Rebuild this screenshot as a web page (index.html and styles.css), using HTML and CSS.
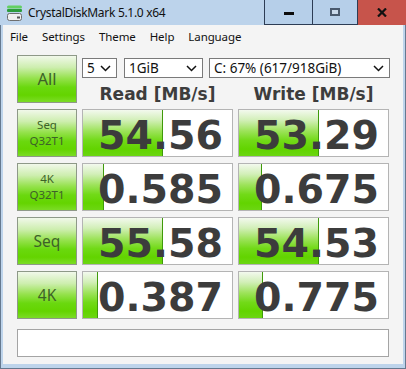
FILE: index.html
```html
<!DOCTYPE html>
<html lang="en">
<head>
  <meta charset="UTF-8">
  <title>CrystalDiskMark 5.1.0 x64</title>
  <link rel="stylesheet" href="styles.css">
</head>
<body>
  <div class="window">
    <div class="titlebar">
      <svg class="app-icon" viewBox="0 0 17 16">
        <rect x="1" y="0.5" width="15" height="3" rx="1.5" fill="#62d062"/>
        <rect x="1" y="4" width="15" height="3" rx="1" fill="#2c9c3c"/>
        <rect x="1.5" y="8.5" width="14" height="7" rx="2" fill="#efefef" stroke="#6e6e6e"/>
        <rect x="11" y="11.5" width="3" height="2" fill="#555"/>
      </svg>
      <span class="title">CrystalDiskMark 5.1.0 x64</span>
      <div class="caption-buttons">
        <div class="cap-btn min"><span class="min-glyph"></span></div>
        <div class="cap-btn max"><span class="max-glyph"></span></div>
        <div class="cap-btn close">
          <svg width="10" height="9" viewBox="0 0 10 9"><path d="M1 0.5 L9 8.5 M9 0.5 L1 8.5" stroke="#111" stroke-width="2.2"/></svg>
        </div>
      </div>
    </div>

    <div class="pane">
      <div class="menubar">
        <span>File</span>
        <span>Settings</span>
        <span>Theme</span>
        <span>Help</span>
        <span>Language</span>
      </div>

      <div class="client">
        <div class="board">
          <div class="btn big">All</div>
          <div class="controls">
            <div class="selects">
              <div class="select s-count">5<svg class="chev" viewBox="0 0 11 7"><path d="M1 1 L5.5 5.5 L10 1" fill="none" stroke="#111" stroke-width="1.5"/></svg></div>
              <div class="select s-size">1GiB<svg class="chev" viewBox="0 0 11 7"><path d="M1 1 L5.5 5.5 L10 1" fill="none" stroke="#111" stroke-width="1.5"/></svg></div>
              <div class="select s-drive">C: 67% (617/918GiB)<svg class="chev" viewBox="0 0 11 7"><path d="M1 1 L5.5 5.5 L10 1" fill="none" stroke="#111" stroke-width="1.5"/></svg></div>
            </div>
            <div class="headers">
              <div>Read [MB/s]</div>
              <div>Write [MB/s]</div>
            </div>
          </div>

          <div class="btn"><span>Seq</span><span>Q32T1</span></div>
          <div class="cell"><span class="fill" style="width: 80px"></span><span class="value">54.56</span></div>
          <div class="cell"><span class="fill" style="width: 80px"></span><span class="value">53.29</span></div>

          <div class="btn"><span>4K</span><span>Q32T1</span></div>
          <div class="cell"><span class="fill" style="width: 21px"></span><span class="value">0.585</span></div>
          <div class="cell"><span class="fill" style="width: 23px"></span><span class="value">0.675</span></div>

          <div class="btn single"><span>Seq</span></div>
          <div class="cell"><span class="fill" style="width: 80px"></span><span class="value">55.58</span></div>
          <div class="cell"><span class="fill" style="width: 80px"></span><span class="value">54.53</span></div>

          <div class="btn single"><span>4K</span></div>
          <div class="cell"><span class="fill" style="width: 15px"></span><span class="value">0.387</span></div>
          <div class="cell"><span class="fill" style="width: 24px"></span><span class="value">0.775</span></div>
        </div>

        <div class="comment"></div>
      </div>
    </div>
  </div>
</body>
</html>
```

FILE: styles.css
```css
* {
  box-sizing: border-box;
}
body {
  margin: 0;
  font-family: "Noto Sans", sans-serif;
  color: #111;
}
.window {
  width: 406px;
  height: 369px;
  background: #bed4eb;
  display: flex;
  flex-direction: column;
  box-shadow: inset 1px 0 #66798f, inset -1px 0 #66798f, inset 0 -1px #66798f;
}

/* title bar */
.titlebar {
  height: 25px;
  display: flex;
  align-items: center;
  background: #bcd3eb;
}
.app-icon {
  width: 17px;
  height: 16px;
  margin: 0 5px 0 6px;
}
.title {
  flex: 1;
  font-size: 12px;
  letter-spacing: -0.3px;
}
.caption-buttons {
  display: flex;
  align-self: flex-start;
  height: 25px;
}
.cap-btn {
  height: 25px;
  display: flex;
  align-items: center;
  justify-content: center;
  border-left: 1px solid #2d3c54;
}
.min, .max {
  border-bottom: 1px solid #2d3c54;
  background: #b6cfe9;
}
.min { width: 48px; }
.max { width: 45px; }
.close {
  width: 49px;
  background: #c7544b;
}
.min-glyph {
  width: 10px;
  height: 3px;
  background: #0c0c0c;
  margin-top: 3px;
}
.max-glyph {
  width: 10px;
  height: 8px;
  border: 2px solid #4a5a6e;
  background: #c9d9ea;
}

/* menu + client */
.pane {
  flex: 1;
  margin: 0 3px 5px;
  background: #f4f4f4;
  display: flex;
  flex-direction: column;
}
.menubar {
  height: 23px;
  display: flex;
  align-items: center;
  font-size: 11.5px;
  letter-spacing: -0.1px;
}
.menubar span {
  padding: 0 7px;
}
.client {
  flex: 1;
  padding: 7px 14px 0;
}
.board {
  display: grid;
  grid-template-columns: 60px 151px 151px;
  grid-auto-rows: 48px;
  column-gap: 5px;
  row-gap: 6px;
}

/* test buttons */
.btn {
  border: 1px solid #8e9988;
  background: linear-gradient(#f1f8ea 0%, #cdeeae 25%, #96e24e 48%, #6ad80e 68%, #64d400 85%, #7bdc26 100%);
  display: flex;
  flex-direction: column;
  align-items: center;
  justify-content: center;
  gap: 0;
  text-align: center;
  color: #3d6228;
  font-size: 11.5px;
  line-height: 16px;
}
.btn.big {
  font-size: 16.5px;
  line-height: 22px;
}
.btn.single {
  font-size: 15.5px;
  line-height: 21px;
}

/* selects + headers */
.controls {
  grid-column: 2 / 4;
  display: flex;
  flex-direction: column;
}
.selects {
  display: flex;
  margin-top: 3px;
  height: 20px;
}
.select {
  height: 20px;
  border: 1px solid #7a7a7a;
  background: #fff;
  display: flex;
  align-items: center;
  justify-content: space-between;
  padding: 0 5px 0 4px;
  font-size: 13.5px;
  line-height: 18px;
}
.s-count {
  width: 35px;
  margin-right: 7px;
}
.s-size {
  width: 79px;
  margin-right: 6px;
}
.s-drive {
  flex: 1;
  margin-right: -1px;
}
.chev {
  width: 11px;
  height: 7px;
}
.headers {
  display: grid;
  grid-template-columns: 151px 151px;
  column-gap: 5px;
  margin-top: 6px;
  font: bold 17px/20px "DejaVu Sans", sans-serif;
  color: #3d3d3d;
  text-align: center;
}

/* result cells */
.cell {
  position: relative;
  overflow: hidden;
  border: 1px solid #b4b4b4;
  background: #fff;
  text-align: right;
  padding: 4px 9px 0 0;
  font: bold 39.5px/42px "DejaVu Sans", sans-serif;
  color: #3c3c3c;
}
.fill {
  position: absolute;
  left: 0;
  top: 0;
  bottom: 0;
  background: linear-gradient(#f3f9ee 0%, #d2efb8 22%, #9ee35c 45%, #72da18 66%, #62d400 85%, #6cd612 100%);
  border-right: 1px solid #3f9a0a;
}
.value {
  position: relative;
}

.comment {
  margin-top: 10px;
  height: 28px;
  border: 1px solid #a4a4a4;
  background: #fff;
}
```
